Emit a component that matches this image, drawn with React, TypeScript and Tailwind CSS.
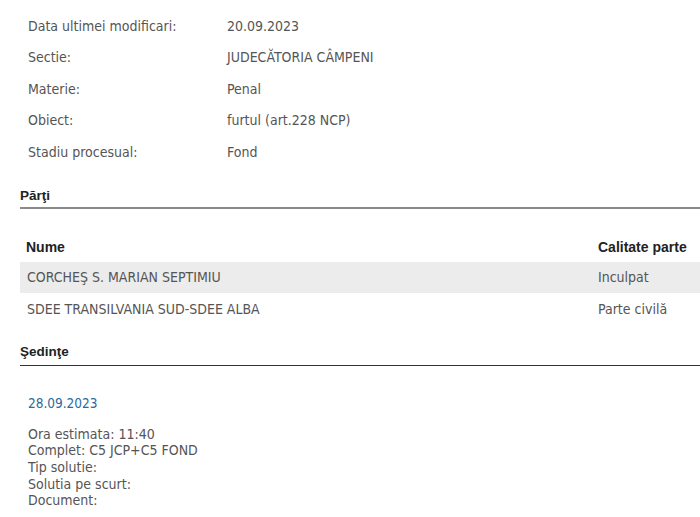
import React from "react";

const body = { fontFamily: '"DejaVu Sans Condensed", "DejaVu Sans", Tahoma, sans-serif' };
const head = { fontFamily: '"Liberation Sans", Arial, sans-serif' };

const info: [string, string][] = [
  ["Data inregistrare:", "15.09.2023"],
  ["Data ultimei modificari:", "20.09.2023"],
  ["Sectie:", "JUDECĂTORIA CÂMPENI"],
  ["Materie:", "Penal"],
  ["Obiect:", "furtul (art.228 NCP)"],
  ["Stadiu procesual:", "Fond"],
];

export default function App() {
  return (
    <div className="w-[700px] h-[517px] overflow-hidden bg-white text-[14px] text-[#555]" style={body}>
      <div className="ml-[20px] w-[760px]">
        <div className="-mt-[27.25px] pl-[8px]">
          {info.map(([k, v], i) => (
            <div key={k} className={i === 0 ? "flex h-[37.5px] items-center" : "flex h-[31.5px] items-center"}>
              <div className="w-[199px]">{k}</div>
              <div>{v}</div>
            </div>
          ))}
        </div>

        <div className="mt-[18px] border-b-2 border-[#8a8a8a] pb-[2px] text-[13.5px] leading-[19.5px] font-bold text-[#222]" style={head}>
          Părţi
        </div>

        <div className="mt-[27px]">
          <div className="mb-[4px] flex h-[22px] items-center text-[14px] font-bold text-[#222]" style={head}>
            <div className="w-[578px] pl-[6px]">Nume</div>
            <div>Calitate parte</div>
          </div>
          <div className="flex h-[31px] items-center bg-[#ececec]">
            <div className="w-[578px] pl-[7px]">CORCHEŞ S. MARIAN SEPTIMIU</div>
            <div>Inculpat</div>
          </div>
          <div className="flex h-[32px] items-center">
            <div className="w-[578px] pl-[7px]">SDEE TRANSILVANIA SUD-SDEE ALBA</div>
            <div>Parte civilă</div>
          </div>
        </div>

        <div className="mt-[17px] border-b border-[#333] pb-[3px] text-[13.5px] leading-[19.5px] font-bold text-[#222]" style={head}>
          Şedinţe
        </div>

        <div className="pl-[8px]">
          <div className="mt-[27px] text-[13.5px] leading-[21px] text-[#2a6a9c]">28.09.2023</div>
          <div className="mt-[12px] leading-[16.6px]">
            <div>Ora estimata: 11:40</div>
            <div>Complet: C5 JCP+C5 FOND</div>
            <div>Tip solutie:</div>
            <div>Solutia pe scurt:</div>
            <div>Document:</div>
          </div>
        </div>
      </div>
    </div>
  );
}
